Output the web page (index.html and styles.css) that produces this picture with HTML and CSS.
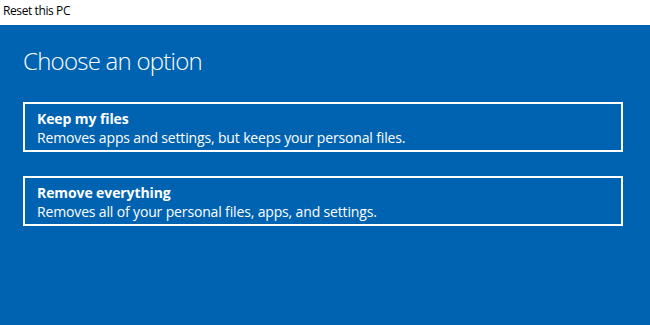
FILE: index.html
```html
<!DOCTYPE html>
<html lang="en">
<head>
<meta charset="utf-8">
<title>Reset this PC</title>
<link rel="stylesheet" href="styles.css">
</head>
<body>
<div class="titlebar">Reset this PC</div>
<main class="panel">
  <h1 class="heading">Choose an option</h1>
  <div class="options">
    <div class="option">
      <div class="option-title">Keep my files</div>
      <div class="option-desc">Removes apps and settings, but keeps your personal files.</div>
    </div>
    <div class="option">
      <div class="option-title">Remove everything</div>
      <div class="option-desc">Removes all of your personal files, apps, and settings.</div>
    </div>
  </div>
</main>
</body>
</html>
```
FILE: styles.css
```css
html, body {
  margin: 0;
  padding: 0;
  height: 100%;
}
body {
  font-family: "Open Sans", "Noto Sans", "Liberation Sans", sans-serif;
  background: #0063b1;
  display: flex;
  flex-direction: column;
}
.titlebar {
  height: 25px;
  background: #ffffff;
  color: #000000;
  font-size: 12px;
  letter-spacing: -0.4px;
  padding-left: 3px;
  box-sizing: border-box;
  line-height: 22px;
}
.panel {
  flex: 1;
  background: #0063b1;
  color: #ffffff;
  padding: 21px 27px 0 23px;
}
.heading {
  margin: 0;
  font-size: 24px;
  font-weight: 300;
  letter-spacing: -0.75px;
  line-height: 30px;
}
.options {
  margin-top: 26px;
  display: flex;
  flex-direction: column;
  gap: 24px;
  width: 600px;
}
.option {
  border: 2px solid #ffffff;
  height: 50px;
  box-sizing: border-box;
  padding: 6px 0 0 12px;
}
.option-title {
  font-size: 14px;
  font-weight: 700;
  line-height: 18px;
  letter-spacing: -0.1px;
}
.option-desc {
  font-size: 14px;
  line-height: 19px;
  letter-spacing: -0.15px;
}
```
